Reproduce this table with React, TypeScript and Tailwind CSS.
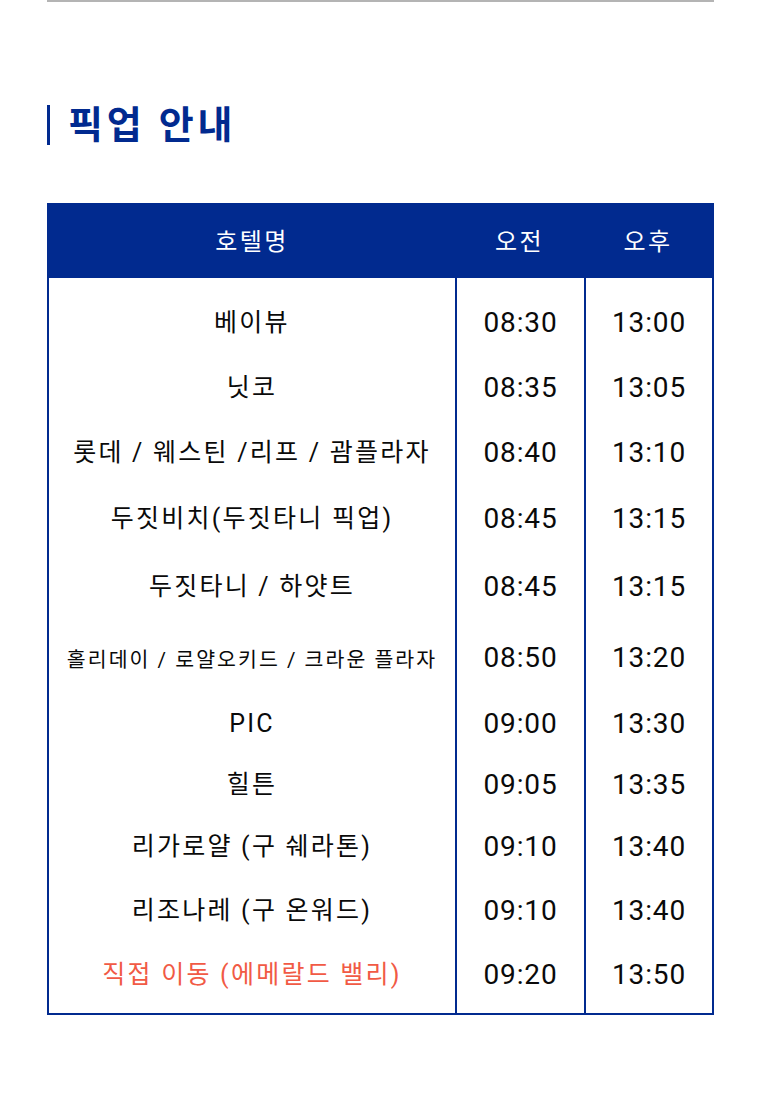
import React from "react";

const rows: { name: string; am: string; pm: string; h: number; small?: boolean; red?: boolean }[] = [
  { name: "베이뷰", am: "08:30", pm: "13:00", h: 64 },
  { name: "닛코", am: "08:35", pm: "13:05", h: 65 },
  { name: "롯데 / 웨스틴 /리프 / 괌플라자", am: "08:40", pm: "13:10", h: 66 },
  { name: "두짓비치(두짓타니 픽업)", am: "08:45", pm: "13:15", h: 66 },
  { name: "두짓타니 / 하얏트", am: "08:45", pm: "13:15", h: 70 },
  { name: "홀리데이 / 로얄오키드 / 크라운 플라자", am: "08:50", pm: "13:20", h: 71, small: true },
  { name: "PIC", am: "09:00", pm: "13:30", h: 62 },
  { name: "힐튼", am: "09:05", pm: "13:35", h: 60 },
  { name: "리가로얄 (구 쉐라톤)", am: "09:10", pm: "13:40", h: 64 },
  { name: "리조나레 (구 온워드)", am: "09:10", pm: "13:40", h: 64 },
  { name: "직접 이동 (에메랄드 밸리)", am: "09:20", pm: "13:50", h: 63, red: true },
];

const font = { fontFamily: "Roboto, 'Noto Sans CJK KR', sans-serif" };

export default function App() {
  return (
    <div className="w-[763px] min-h-[1110px] bg-white" style={font}>
      <div className="ml-[47px] w-[667px]">
        <div className="h-[2px] bg-[#b4b4b4]" />
        <div className="mt-[103px] flex h-[40px] items-center">
          <div className="h-[40px] w-[3px] bg-[#012a8f]" />
          <h2 className="ml-[18px] text-[38px] font-bold leading-none tracking-[0.1em] text-[#012a8f]">픽업 안내</h2>
        </div>
        <div className="mt-[58px] border-2 border-[#012a8f]">
          <div className="grid h-[73px] grid-cols-[406px_129px_128px] items-center bg-[#012a8f] text-[24px] tracking-[0.1em] text-white">
            <div className="text-center">호텔명</div>
            <div className="text-center">오전</div>
            <div className="text-center">오후</div>
          </div>
          <div className="grid grid-cols-[406px_129px_128px] text-[#0a0a0a]">
            <div className="h-[13px]" />
            <div className="h-[13px] border-l-2 border-[#012a8f]" />
            <div className="h-[13px] border-l-2 border-[#012a8f]" />
            {rows.map((r, i) => (
              <React.Fragment key={i}>
                <div
                  className={`flex items-center justify-center whitespace-nowrap ${r.small ? "pt-[5px] text-[20.5px] tracking-[0.1em]" : "text-[25px] tracking-[0.09em]"} ${r.red ? "text-[#f15a45]" : ""}`}
                  style={{ height: r.h }}
                >
                  {r.name}
                </div>
                <div className="flex items-center justify-center border-l-2 border-[#012a8f] text-[28px] tracking-[0.03em]" style={{ height: r.h }}>
                  {r.am}
                </div>
                <div className="flex items-center justify-center border-l-2 border-[#012a8f] text-[28px] tracking-[0.03em]" style={{ height: r.h }}>
                  {r.pm}
                </div>
              </React.Fragment>
            ))}
            <div className="h-[7px]" />
            <div className="h-[7px] border-l-2 border-[#012a8f]" />
            <div className="h-[7px] border-l-2 border-[#012a8f]" />
          </div>
        </div>
      </div>
    </div>
  );
}
